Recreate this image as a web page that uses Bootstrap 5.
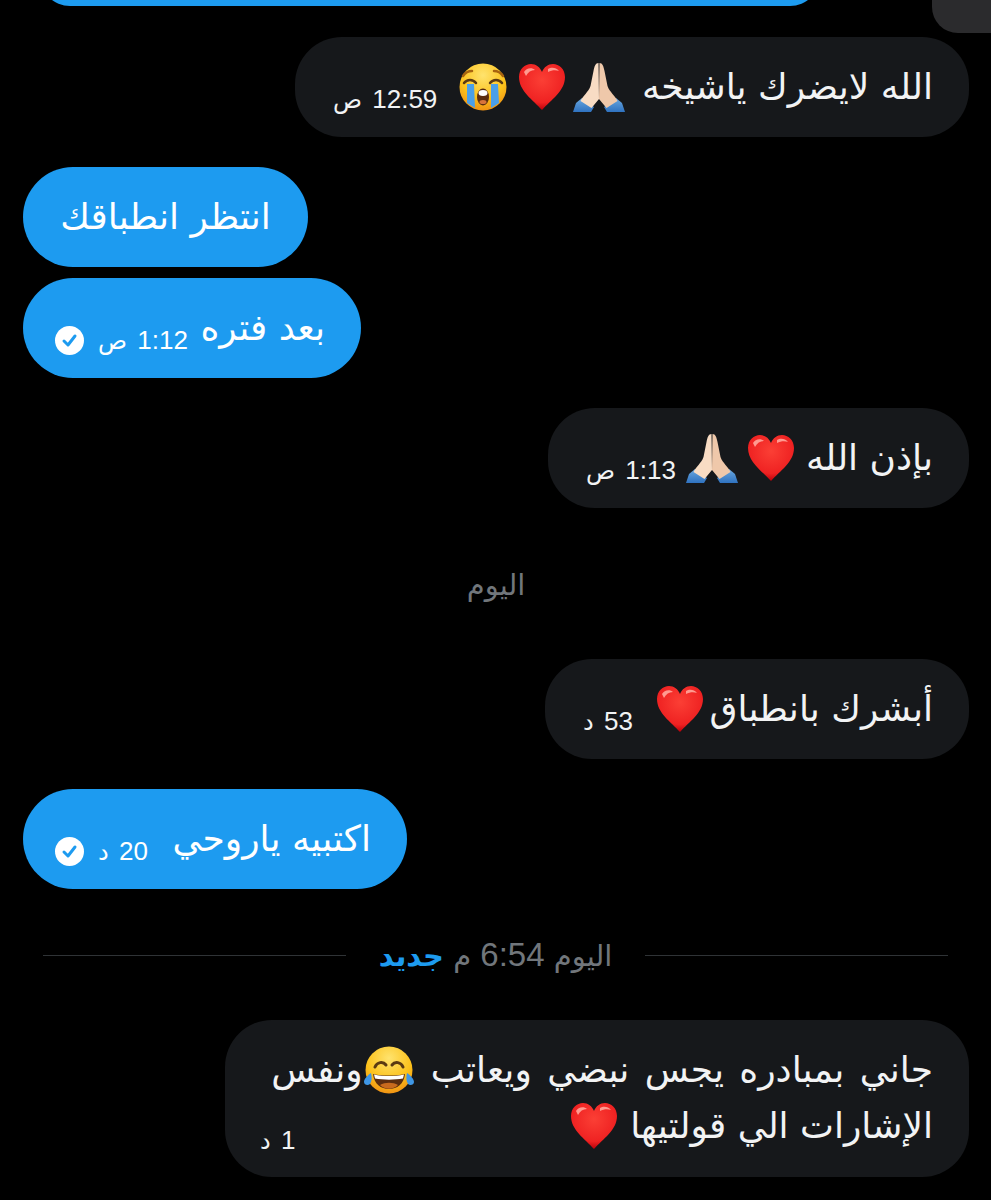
<!DOCTYPE html>
<html lang="ar" dir="rtl">
<head>
  <meta charset="UTF-8">
  <meta name="viewport" content="width=device-width, initial-scale=1.0">
  <title>Chat</title>
  <link href="https://cdn.jsdelivr.net/npm/bootstrap@5.3.1/dist/css/bootstrap.min.css" rel="stylesheet">
  <style>
    body {
      background: #000;
      color: #e7e9ea;
      font-family: "DejaVu Sans", "Liberation Sans", sans-serif;
      height: 1200px;
      overflow: hidden;
    }
    .thread { padding: 0 22px 0 23px; }
    .top-strip { margin: 0 -22px 31px -23px; height: 6px; }
    .top-stub {
      width: 59px;
      height: 33px;
      background: #2b2b2d;
      border-bottom-left-radius: 26px;
      flex: none;
    }
    .top-tail {
      width: 780px;
      height: 60px;
      margin-top: -54px;
      margin-left: 40px;
      background: #1d9bf0;
      border-radius: 30px;
      flex: none;
    }
    .bubble {
      height: 100px;
      padding: 0 36px;
      border-radius: 47px;
      font-size: 36px;
      line-height: 48px;
      white-space: nowrap;
    }
    .bubble-in { background: #16181b; color: #f2f3f4; padding-left: 38px; }
    .bubble-out { background: #1d9bf0; color: #fff; border-radius: 50px; }
    .bubble-checked { padding-left: 32px; }
    .stamp {
      font-size: 26px;
      line-height: 30px;
      margin-top: 24px;
      word-spacing: 3px;
      font-family: "Liberation Sans", "DejaVu Sans", sans-serif;
    }
    .stamp-tight { letter-spacing: -1.5px; }
    .stamp-ar { font-family: "DejaVu Sans", sans-serif; font-size: 24px; letter-spacing: 0; }
    .moji { width: 48px; height: 48px; flex: none; }
    .moji-pray { width: 54px; height: 50px; }
    .moji-joy { width: 52px; height: 48px; flex: none; }
    .tick { width: 29px; height: 29px; margin-top: 24px; margin-right: 14px; flex: none; }
    .gap-s { margin-right: 6px; }
    .gap-n { margin-right: 8px; }
    .gap-m { margin-right: 11px; }
    .gap-h { margin-right: 12px; }
    .gap-l { margin-right: 16px; }
    .w-first { width: 674px; }
    .w-wait { width: 285px; margin-top: 30px; }
    .w-later { width: 338px; margin-top: 11px; }
    .w-god { width: 421px; margin-top: 30px; }
    .w-glad { width: 424px; }
    .w-write { width: 384px; margin-top: 30px; }
    .w-last {
      width: 744px;
      height: 157px;
      margin-top: 47px;
      padding: 22px 36px 0 35px;
      border-radius: 47px;
      white-space: normal;
    }
    .last-row { height: 56px; }
    .line-wide { word-spacing: 4px; }
    .day-note {
      color: #71767b;
      font-size: 29px;
      line-height: 36px;
      margin: 59px 0 56px;
    }
    .rule-row { margin: 48px 21px 0 20px; height: 36px; gap: 33px; color: #71767b; font-size: 29px; }
    .rule-line { flex: 1; height: 1px; background: #2f3336; }
    .rule-new { color: #1d9bf0; font-weight: 700; }
    .rule-time { font-family: "Liberation Sans", "DejaVu Sans", sans-serif; font-size: 33px; }
    .last-stamp { margin-top: 28px; }
  </style>
</head>
<body>

<svg width="0" height="0" class="d-block">
  <defs>
    <radialGradient id="faceFill" cx="50%" cy="25%" r="80%">
      <stop offset="0" stop-color="#ffe36e"/>
      <stop offset="0.6" stop-color="#fcc21b"/>
      <stop offset="1" stop-color="#ee8a12"/>
    </radialGradient>
    <radialGradient id="heartFill" cx="50%" cy="35%" r="65%">
      <stop offset="0" stop-color="#fb3f35"/>
      <stop offset="0.75" stop-color="#ef2222"/>
      <stop offset="1" stop-color="#b8000a"/>
    </radialGradient>
    <linearGradient id="sleeveFill" x1="0" y1="0" x2="0" y2="1">
      <stop offset="0" stop-color="#6aa8e0"/>
      <stop offset="1" stop-color="#2f72c0"/>
    </linearGradient>
    <symbol id="m-heart" viewBox="0 0 48 48">
      <path d="M24 47C15 37 1 28 1 14 1 6 7 1 13 1c5 0 9 3 11 8 2-5 6-8 11-8 6 0 12 5 12 13 0 14-14 23-23 33z" fill="url(#heartFill)"/>
      <path d="M6 9c2-4 8-5 11-2-4 0-7 2-9 6z" fill="#ff9a90"/>
      <path d="M30 6c3-2 8-2 11 2-3-1-7-1-11 1z" fill="#ff9a90"/>
    </symbol>
    <symbol id="m-pray" viewBox="0 0 54 50">
      <path d="M1 50l3-9 6-5 12 9-3 5z" fill="url(#sleeveFill)"/>
      <path d="M53 50l-3-9-6-5-12 9 3 5z" fill="url(#sleeveFill)"/>
      <path d="M26.500 1c-3 0-4 3-5 8l-3 15c-2 6-8 10-10 15l11 7 7.500-9z" fill="#f8dcc4"/>
      <path d="M27.500 1c3 0 4 3 5 8l3 15c2 6 8 10 10 15l-11 7-7.500-9z" fill="#efc8aa"/>
    </symbol>
    <symbol id="m-sob" viewBox="0 0 48 48">
      <circle cx="24" cy="24" r="23.500" fill="url(#faceFill)"/>
      <path d="M4 13c2-3 6-5 9-5M44 13c-2-3-6-5-9-5" stroke="#a8640f" stroke-width="2.500" fill="none" stroke-linecap="round"/>
      <path d="M5 20c3-4 9-4 12 0M31 20c3-4 9-4 12 0" stroke="#5b3a12" stroke-width="2.500" fill="none" stroke-linecap="round"/>
      <path d="M8 21h7l1 24-8-5zM32 21h7l1 19-8 5z" fill="#4a9fe8"/>
      <ellipse cx="24" cy="34" rx="6" ry="8.500" fill="#5a2d10"/>
      <ellipse cx="24" cy="30" rx="4.500" ry="3" fill="#fff"/>
      <ellipse cx="24" cy="39" rx="3.500" ry="2" fill="#d9733a"/>
    </symbol>
    <symbol id="m-joy" viewBox="0 0 52 48">
      <circle cx="26" cy="24" r="23.500" fill="url(#faceFill)"/>
      <path d="M12 21c2-5 8-6 11-2M29 19c3-4 9-3 11 2" stroke="#5b3a12" stroke-width="3" fill="none" stroke-linecap="round"/>
      <path d="M10 28c10 2 22 2 32 0-1 10-8 15-16 15S11 38 10 28z" fill="#5a2d10"/>
      <path d="M11 28.500c9 2 21 2 30 0l-1 4c-8 1.500-20 1.500-28 0z" fill="#fff"/>
      <path d="M17 39c5-3 13-3 18 0-5 5-13 5-18 0z" fill="#c86a1e"/>
      <path d="M8 27c-3 2-7 6-7 9 0 3 4 4 6 2 2-3 2-7 1-11zM44 27c3 2 7 6 7 9 0 3-4 4-6 2-2-3-2-7-1-11z" fill="#3f97e6"/>
    </symbol>
    <symbol id="m-tick" viewBox="0 0 29 29">
      <circle cx="14.500" cy="14.500" r="14.500" fill="#fff"/>
      <path d="M9 15l4 4 7-9" stroke="#1d9bf0" stroke-width="3" fill="none" stroke-linecap="round" stroke-linejoin="round"/>
    </symbol>
  </defs>
</svg>

<div class="thread d-flex flex-column">
  <div class="top-strip d-flex justify-content-between">
    <div class="top-stub"></div>
    <div class="top-tail"></div>
  </div>

  <div class="bubble bubble-in w-first d-flex align-items-center align-self-start">
    <span>الله لايضرك ياشيخه</span>
    <svg class="moji moji-pray gap-l"><use href="#m-pray"/></svg>
    <svg class="moji gap-s"><use href="#m-heart"/></svg>
    <svg class="moji gap-m"><use href="#m-sob"/></svg>
    <span class="stamp me-auto">12:59 <span class="stamp-ar">ص</span></span>
  </div>

  <div class="bubble bubble-out w-wait d-flex align-items-center justify-content-center align-self-end">
    <span>انتظر انطباقك</span>
  </div>

  <div class="bubble bubble-out bubble-checked w-later d-flex align-items-center align-self-end">
    <span>بعد فتره</span>
    <span class="stamp stamp-tight me-auto">1:12 <span class="stamp-ar">ص</span></span>
    <svg class="tick"><use href="#m-tick"/></svg>
  </div>

  <div class="bubble bubble-in w-god d-flex align-items-center align-self-start">
    <span>بإذن الله</span>
    <svg class="moji gap-m"><use href="#m-heart"/></svg>
    <svg class="moji moji-pray gap-n"><use href="#m-pray"/></svg>
    <span class="stamp stamp-tight me-auto">1:13 <span class="stamp-ar">ص</span></span>
  </div>

  <div class="day-note text-center">اليوم</div>

  <div class="bubble bubble-in w-glad d-flex align-items-center align-self-start">
    <span>أبشرك بانطباق</span>
    <svg class="moji gap-s"><use href="#m-heart"/></svg>
    <span class="stamp me-auto">53 <span class="stamp-ar">د</span></span>
  </div>

  <div class="bubble bubble-out bubble-checked w-write d-flex align-items-center align-self-end">
    <span>اكتبيه ياروحي</span>
    <span class="stamp me-auto">20 <span class="stamp-ar">د</span></span>
    <svg class="tick"><use href="#m-tick"/></svg>
  </div>

  <div class="rule-row d-flex align-items-center">
    <div class="rule-line"></div>
    <div>اليوم <span class="rule-time">6:54</span> م <span class="rule-new">جديد</span></div>
    <div class="rule-line"></div>
  </div>

  <div class="bubble bubble-in w-last align-self-start">
    <div class="last-row d-flex align-items-center">
      <span class="line-wide">جاني بمبادره يجس نبضي ويعاتب</span>
      <svg class="moji-joy gap-l"><use href="#m-joy"/></svg>
      <span>ونفس</span>
    </div>
    <div class="last-row d-flex align-items-center">
      <span>الإشارات الي قولتيها</span>
      <svg class="moji gap-h"><use href="#m-heart"/></svg>
      <span class="stamp last-stamp me-auto">1 <span class="stamp-ar">د</span></span>
    </div>
  </div>
</div>

</body>
</html>
